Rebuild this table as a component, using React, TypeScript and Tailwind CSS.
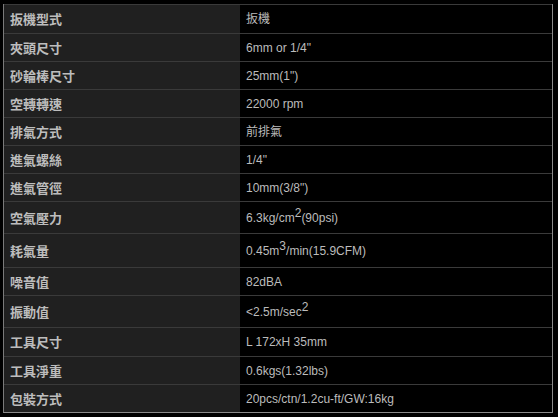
import React from 'react'

type Spec = {
  label: string
  value: React.ReactNode
  h: string
}

const Sup = ({ children }: { children: React.ReactNode }) => (
  <sup className="text-[12px] top-[-0.4em]">{children}</sup>
)

// row heights include the 1px separator line on top
const SPECS: Spec[] = [
  { label: '扳機型式', value: '扳機', h: 'h-[29px]' },
  { label: '夾頭尺寸', value: '6mm or 1/4"', h: 'h-[28px]' },
  { label: '砂輪棒尺寸', value: '25mm(1")', h: 'h-[28px]' },
  { label: '空轉轉速', value: '22000 rpm', h: 'h-[28px]' },
  { label: '排氣方式', value: '前排氣', h: 'h-[28px]' },
  { label: '進氣螺絲', value: '1/4"', h: 'h-[28px]' },
  { label: '進氣管徑', value: '10mm(3/8")', h: 'h-[28px]' },
  {
    label: '空氣壓力',
    value: (
      <>
        6.3kg/cm<Sup>2</Sup>(90psi)
      </>
    ),
    h: 'h-[32px]',
  },
  {
    label: '耗氣量',
    value: (
      <>
        0.45m<Sup>3</Sup>/min(15.9CFM)
      </>
    ),
    h: 'h-[34px]',
  },
  { label: '噪音值', value: '82dBA', h: 'h-[28px]' },
  {
    label: '振動值',
    value: (
      <>
        &lt;2.5m/sec<Sup>2</Sup>
      </>
    ),
    h: 'h-[32px]',
  },
  { label: '工具尺寸', value: 'L 172xH 35mm', h: 'h-[29px]' },
  { label: '工具淨重', value: '0.6kgs(1.32lbs)', h: 'h-[28px]' },
  { label: '包裝方式', value: '20pcs/ctn/1.2cu-ft/GW:16kg', h: 'h-[28px]' },
]

export default function App() {
  return (
    <div className="w-[558px] h-[417px] bg-black pt-[4px] pl-[3px] overflow-hidden">
      <div className="w-[550px] flex flex-col border-l border-l-[#7a7a7a] border-r border-r-[#8a8a8a] border-b border-b-[#8a8a8a]">
        {SPECS.map((s) => (
          <div key={s.label} className={`flex border-t border-t-[#3a3a3a] ${s.h}`}>
            <div
              className="w-[236px] bg-[#202020] flex items-center pl-[6px] text-[13px] font-bold text-[#bdbdbd]"
              style={{ fontFamily: '"Noto Sans CJK TC", "Liberation Sans", sans-serif' }}
            >
              {s.label}
            </div>
            <div
              className="flex-1 bg-black flex items-center pl-[6px] text-[12px] text-[#bcbcbc]"
              style={{ fontFamily: '"Liberation Sans", "Noto Sans CJK TC", sans-serif' }}
            >
              <span>{s.value}</span>
            </div>
          </div>
        ))}
      </div>
    </div>
  )
}
